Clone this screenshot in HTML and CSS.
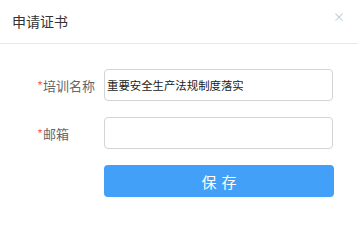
FILE: index.html
```html
<!DOCTYPE html>
<html lang="zh">
<head>
<meta charset="utf-8">
<link rel="stylesheet" href="styles.css">
</head>
<body>
<div class="dialog">
  <div class="header">
    <span class="title">申请证书</span>
    <span class="close">&#215;</span>
  </div>
  <div class="body">
    <div class="row">
      <label class="label"><span class="req">*</span>培训名称</label>
      <div class="input">重要安全生产法规制度落实</div>
    </div>
    <div class="row">
      <label class="label"><span class="req">*</span>邮箱</label>
      <div class="input"></div>
    </div>
    <div class="row">
      <span class="label"></span>
      <button class="btn">保存</button>
    </div>
  </div>
</div>
</body>
</html>
```
FILE: styles.css
```css
html, body {
  margin: 0;
  padding: 0;
  background: #fff;
}
body {
  width: 358px;
  height: 220px;
  font-family: "Noto Sans CJK SC", "Liberation Sans", sans-serif;
}
.dialog {
  width: 358px;
  height: 220px;
  background: #fff;
  box-sizing: border-box;
  overflow: hidden;
}
.header {
  height: 44px;
  border-bottom: 1px solid #e8e8e8;
  display: flex;
  align-items: center;
  justify-content: space-between;
  padding: 0 12px 2px 12px;
  box-sizing: border-box;
}
.title {
  font-size: 14px;
  color: #333;
}
.close {
  font-size: 12px;
  color: #c8c8c8;
  margin-top: -8px;
  margin-right: 1px;
}
.body {
  padding: 25px 24px 0 37px;
  display: flex;
  flex-direction: column;
  gap: 16px;
}
.row {
  display: flex;
  align-items: center;
}
.label {
  width: 67px;
  font-size: 13px;
  color: #666;
  flex: none;
}
.req {
  color: #f56c6c;
}
.input {
  width: 229px;
  height: 32px;
  box-sizing: border-box;
  border: 1px solid #d4d4d4;
  border-radius: 4px;
  padding: 0 2px;
  font-size: 11.4px;
  color: #222;
  display: flex;
  align-items: center;
  white-space: nowrap;
}
.btn {
  width: 230px;
  height: 32px;
  border: none;
  border-radius: 4px;
  background: #42a0f8;
  color: #fff;
  font-family: inherit;
  font-size: 15px;
  letter-spacing: 5px;
  text-indent: 5px;
  padding: 0;
}
```
